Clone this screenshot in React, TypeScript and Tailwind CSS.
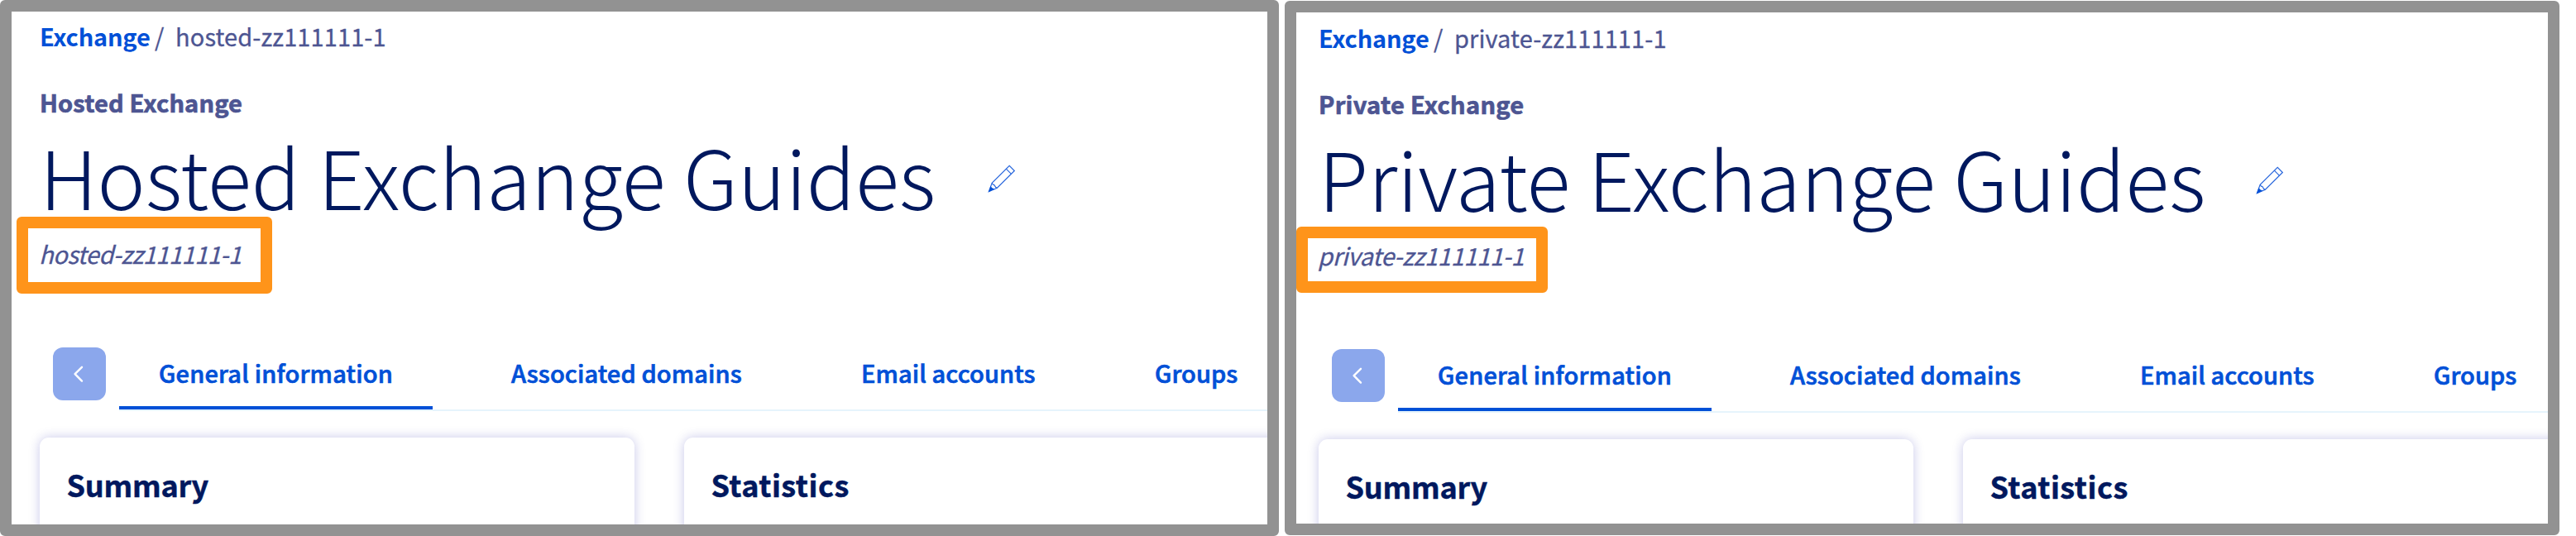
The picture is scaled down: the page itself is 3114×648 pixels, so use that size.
type PanelProps = {
  kind: string;
  service: string;
  frameClass: string;
  contentClass: string;
  crumbClass: string;
  kindClass: string;
  pencilClass: string;
  idClass: string;
};

const tabs = [
  { label: "General information", className: "w-[379px] tracking-[0.2px]", active: true },
  { label: "Associated domains", className: "w-[376px] tracking-[0.12px]", active: false },
  { label: "Email accounts", className: "w-[308px] tracking-[0.1px]", active: false },
  { label: "Groups", className: "w-[200px] tracking-[0.1px]", active: false },
];

function PencilIcon() {
  return (
    <svg className="h-[34px] w-[34px] shrink-0" viewBox="0 0 34 34" fill="none" stroke="#2a68dd" strokeWidth="1.2">
      <path d="M1.3 32.6 L5.3 22 L26.2 1.3 L32.3 7.5 L11.4 28.2 Z" />
      <path d="M22.3 5.2 L28.5 11.4 M5.3 22 C5.6 24 6.6 24.6 8 24.7 C8.6 26.2 9.3 27.6 11.4 28.2" />
      <path d="M1 33 L3.6 25.6 C4 27.6 5.6 28.8 8.4 29.6 Z" fill="#0050d7" stroke="none" />
    </svg>
  );
}

function Card({ title, className, titleClass }: { title: string; className: string; titleClass: string }) {
  return (
    <section className={`h-40 shrink-0 rounded-[11px] bg-white pl-[32.5px] pt-[30px] shadow-[0_0_14px_rgba(0,0,160,0.22)] ${className}`}>
      <h2 className={`text-[36px] leading-[52px] font-bold text-[#00185e] [-webkit-text-stroke:0.5px_#00185e] ${titleClass}`}>{title}</h2>
    </section>
  );
}

function ExchangePanel({ kind, service, frameClass, contentClass, crumbClass, kindClass, pencilClass, idClass }: PanelProps) {
  return (
    <section className={`relative shrink-0 overflow-hidden rounded-[6px] border-[14px] border-[#929292] bg-white ${frameClass}`}>
      <div className={`flex flex-col whitespace-nowrap text-[29px] leading-[44px] text-[#4d5592] ${contentClass}`}>
        <nav className="flex pt-[7px] [-webkit-text-stroke:0.3px_#4d5592]">
          <a className="w-[139px] font-bold tracking-[-0.2px] text-[#0050d7] [-webkit-text-stroke:0px]">Exchange</a>
          <span className="w-[25px]">/</span>
          <span className={crumbClass}>{service}</span>
        </nav>
        <p className={`mt-9 font-bold [-webkit-text-stroke:0.7px_#4d5592] ${kindClass}`}>{kind}</p>
        <div className="mt-[6px] flex h-[120px] items-center">
          <h1 className="text-[98px] leading-[120px] font-light tracking-[-0.03px] text-[#00185e]">{kind} Guides</h1>
          <button className={`mt-[10px] ${pencilClass}`} aria-label="Edit">
            <PencilIcon />
          </button>
        </div>
        <p className={`-ml-px mt-[13px] italic [-webkit-text-stroke:0.3px_#4d5592] ${idClass}`}>{service}</p>
        <div className="mt-[77px] flex h-[92px]">
          <button className="ml-4 mt-[15px] flex size-16 shrink-0 items-center justify-center rounded-[12px] bg-[#8ba7ec]" aria-label="Previous">
            <svg className="size-6" viewBox="0 0 24 24" fill="none" stroke="white" strokeWidth="2.4" strokeLinecap="round" strokeLinejoin="round">
              <path d="M15 3.8 L6.6 12.2 L15 20.6" />
            </svg>
          </button>
          <ul className="ml-4 flex grow gap-[47px] border-b-2 border-[#e6f4fc]">
            {tabs.map((tab) => (
              <li
                key={tab.label}
                className={`h-[90px] shrink-0 pl-12 pt-[23px] font-medium text-[#0050d7] [-webkit-text-stroke:0.7px_#0050d7] ${tab.className} ${tab.active ? "border-b-4 border-[#0050d7]" : ""}`}
              >
                {tab.label}
              </li>
            ))}
          </ul>
        </div>
        <div className="mt-8 flex gap-[60px]">
          <Card title="Summary" className="w-[719px]" titleClass="tracking-[-0.2px]" />
          <Card title="Statistics" className="w-[760px]" titleClass="tracking-[0.5px]" />
        </div>
      </div>
    </section>
  );
}

export default function App() {
  return (
    <main className="flex h-[648px] w-[3114px] items-start gap-[7px] overflow-hidden bg-white [font-family:'Noto_Sans_CJK_JP','Noto_Sans',sans-serif]">
      <div className="relative">
        <ExchangePanel
          kind="Hosted Exchange"
          service="hosted-zz111111-1"
          frameClass="h-[648px] w-[1546px]"
          contentClass="pl-[34px]"
          crumbClass="tracking-[0.1px]"
          kindClass="tracking-[0.17px]"
          pencilClass="ml-[63px]"
          idClass="tracking-[-0.5px]"
        />
        <div className="absolute left-[20px] top-[262px] h-[93px] w-[309px] rounded-[6px] border-[14px] border-[#ff941a]" />
      </div>
      <div className="relative pt-px">
        <ExchangePanel
          kind="Private Exchange"
          service="private-zz111111-1"
          frameClass="h-[646px] w-[1541px]"
          contentClass="pl-[27px] pt-px"
          crumbClass="tracking-[0.1px]"
          kindClass="tracking-[0.3px]"
          pencilClass="ml-[61px]"
          idClass="tracking-[-0.3px]"
        />
        <div className="absolute left-[14px] top-[274px] h-[80px] w-[304px] rounded-[6px] border-[14px] border-[#ff941a]" />
      </div>
    </main>
  );
}
